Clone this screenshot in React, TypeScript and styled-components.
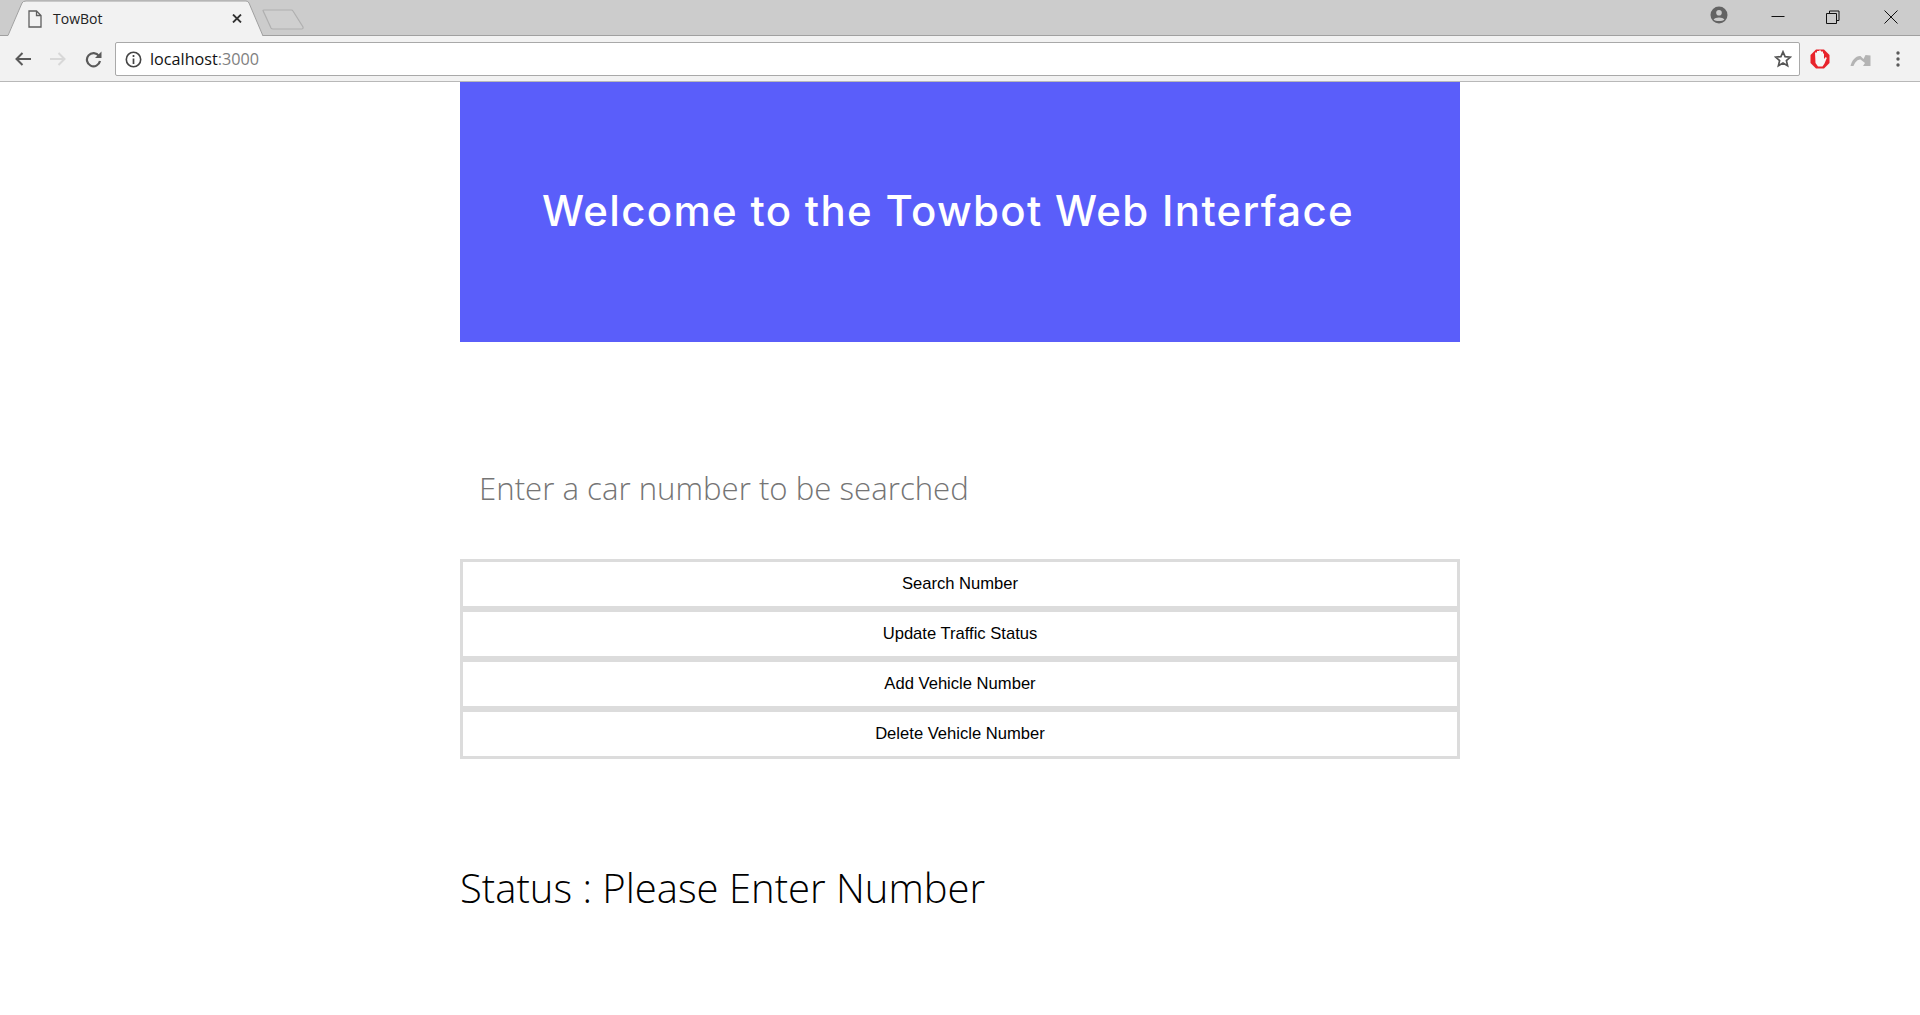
import React from 'react';
import styled, { createGlobalStyle } from 'styled-components';

const GlobalStyle = createGlobalStyle`
    html, body {
        margin: 0;
        padding: 0;
        background: #fff;
    }
    * {
        box-sizing: border-box;
    }
`;

const Page = styled.div`
    width: 1920px;
    height: 1015px;
    overflow: hidden;
    display: flex;
    flex-direction: column;
`;

const TabStrip = styled.div`
    height: 36px;
    background: #cccccc;
    border-bottom: 1px solid #a0a0a0;
    display: flex;
    align-items: flex-start;
`;

const Tab = styled.div`
    position: relative;
    width: 256px;
    height: 36px;
    margin-left: 7px;
    padding: 1px 21px 0 21px;
    display: flex;
    align-items: center;
    column-gap: 11px;
    flex-shrink: 0;
`;

const TabShape = styled.svg`
    position: absolute;
    left: 0;
    top: 0;
`;

const TabFavicon = styled.svg`
    position: relative;
`;

const TabTitle = styled.span`
    position: relative;
    flex: 1;
    font: 14px/18px "Open Sans", sans-serif;
    color: #222;
`;

const TabClose = styled.svg`
    position: relative;
`;

const NewTab = styled.svg`
    margin: 9px 0 0 -1px;
    flex-shrink: 0;
`;

const WindowControls = styled.div`
    margin-left: auto;
    display: flex;
    align-items: center;
    height: 33px;
`;

const ProfileIcon = styled.svg`
    margin-right: 23px;
    margin-top: -3px;
`;

const WindowButton = styled.div<{ $width: number }>`
    width: ${(p) => p.$width}px;
    height: 33px;
    display: flex;
    align-items: center;
    justify-content: center;
`;

const Toolbar = styled.div`
    height: 46px;
    background: #f2f2f2;
    border-bottom: 1px solid #b8b8b8;
    display: flex;
    align-items: center;
    padding: 1px 0 0 15px;
`;

const NavIcon = styled.svg<{ $gap: number }>`
    margin-right: ${(p) => p.$gap}px;
    flex-shrink: 0;
`;

const AddressBar = styled.div`
    width: 1685px;
    height: 34px;
    background: #fff;
    border: 1px solid #a9a9a9;
    border-radius: 2px;
    display: flex;
    align-items: center;
    padding: 0 7px 0 9px;
    flex-shrink: 0;
`;

const InfoIcon = styled.svg`
    margin-right: 8px;
`;

const Url = styled.span`
    flex: 1;
    font: 16.2px/20px "Open Sans", sans-serif;
    color: #111;
`;

const UrlPort = styled.span`
    color: #808080;
`;

const Extensions = styled.div`
    display: flex;
    align-items: center;
    flex: 1;
    padding-left: 10px;
`;

const ExtensionIcon = styled.svg<{ $gap: number }>`
    margin-right: ${(p) => p.$gap}px;
    flex-shrink: 0;
`;

const MenuIcon = styled.svg`
    flex-shrink: 0;
`;

const Main = styled.main`
    width: 1000px;
    margin: 0 auto;
`;

const Hero = styled.header`
    height: 260px;
    background: #5a5efa;
    display: flex;
    align-items: center;
    justify-content: center;
    padding: 0 24px 3px 0;
`;

const HeroTitle = styled.h1`
    margin: 0;
    font: 500 42px/50px Inter, sans-serif;
    letter-spacing: 1.3px;
    color: #fff;
`;

const SearchInput = styled.input`
    display: block;
    width: 100%;
    height: 80px;
    margin-top: 106px;
    padding: 0 19px;
    border: 0;
    outline: 0;
    font: 300 31.2px/44px "Open Sans", sans-serif;
    color: #222;

    &::placeholder {
        color: #757575;
        opacity: 1;
    }
`;

const ButtonStack = styled.div`
    margin-top: 31px;
    display: flex;
    flex-direction: column;
`;

const ActionButton = styled.button`
    height: 50px;
    background: #fff;
    border: 3px solid #dcdcdc;
    color: #000;
    font: 16.6px/20px "Liberation Sans", Arial, sans-serif;
    padding: 0;
    cursor: pointer;
`;

const Status = styled.h2`
    margin: 102px 0 0;
    font: 300 40px/54px "Open Sans", sans-serif;
    color: #000;
`;

const actions = ['Search Number', 'Update Traffic Status', 'Add Vehicle Number', 'Delete Vehicle Number'];

export default function App() {
    return (
        <Page>
            <GlobalStyle />
            <TabStrip>
                <Tab>
                    <TabShape width="256" height="37" viewBox="0 0 256 37">
                        <path d="M0.5 36 L15 3 Q16 1 19 1 L239 1 Q241 1 242 3 L256 36 Z" fill="#f2f2f2" />
                        <path d="M0 35.5 L1 35.5 L15 3 Q16 1 19 1 L239 1 Q241 1 242 3 L256 36" fill="none" stroke="#a0a0a0" />
                    </TabShape>
                    <TabFavicon width="14" height="18" viewBox="0 0 14 18">
                        <path d="M1 1 H8.5 L13 5.5 V17 H1 Z M8.5 1 V5.5 H13" fill="none" stroke="#5f5f5f" strokeWidth="1.3" />
                    </TabFavicon>
                    <TabTitle>TowBot</TabTitle>
                    <TabClose width="10" height="9" viewBox="0 0 10 9">
                        <path d="M1 0.5 L9 8.5 M9 0.5 L1 8.5" stroke="#333" strokeWidth="1.8" />
                    </TabClose>
                </Tab>
                <NewTab width="42" height="21" viewBox="0 0 42 21">
                    <path d="M1 1.5 Q1 1 2 1 L29 1 Q30.5 1 31 2 L41 18 Q41.5 20 39.5 20 L11 20 Q9.5 20 9 19 Z" fill="#cfcfcf" stroke="#b0b0b0" strokeWidth="1.2" />
                </NewTab>
                <WindowControls>
                    <ProfileIcon width="18" height="18" viewBox="0 0 18 18">
                        <circle cx="9" cy="9" r="8.5" fill="#636363" />
                        <circle cx="9" cy="6.8" r="2.8" fill="#cccccc" />
                        <path d="M3.6 13.6 C5 10.8 13 10.8 14.4 13.6 C12.5 15.6 5.5 15.6 3.6 13.6 Z" fill="#cccccc" />
                    </ProfileIcon>
                    <WindowButton $width={53}>
                        <svg width="14" height="14" viewBox="0 0 14 14">
                            <path d="M0.5 6.5 H13.5" stroke="#111" />
                        </svg>
                    </WindowButton>
                    <WindowButton $width={58}>
                        <svg width="14" height="14" viewBox="0 0 14 14">
                            <path d="M3.5 3 V1 H13 V10.5 H11 M0.5 3.5 H10.5 V13.5 H0.5 Z" fill="none" stroke="#111" />
                        </svg>
                    </WindowButton>
                    <WindowButton $width={58}>
                        <svg width="14" height="14" viewBox="0 0 14 14">
                            <path d="M0.5 0.5 L13.5 13.5 M13.5 0.5 L0.5 13.5" stroke="#111" />
                        </svg>
                    </WindowButton>
                </WindowControls>
            </TabStrip>
            <Toolbar>
                <NavIcon $gap={19} width="16" height="14" viewBox="0 0 16 14">
                    <path d="M16 7 H1.5 M7.5 1 L1.5 7 L7.5 13" fill="none" stroke="#5a5a5a" strokeWidth="2" />
                </NavIcon>
                <NavIcon $gap={19} width="16" height="14" viewBox="0 0 16 14">
                    <path d="M0 7 H14.5 M8.5 1 L14.5 7 L8.5 13" fill="none" stroke="#d8d8d8" strokeWidth="2" />
                </NavIcon>
                <NavIcon $gap={13} width="17" height="17" viewBox="0 0 17 17">
                    <path d="M14 5 A6.6 6.6 0 1 0 15 10" fill="none" stroke="#5a5a5a" strokeWidth="2.2" />
                    <path d="M10 7 H16.5 V0.5 Z" fill="#5a5a5a" />
                </NavIcon>
                <AddressBar>
                    <InfoIcon width="17" height="17" viewBox="0 0 17 17">
                        <circle cx="8.5" cy="8.5" r="7.2" fill="none" stroke="#444" strokeWidth="1.6" />
                        <path d="M8.5 7.5 V13 M8.5 4 V6" stroke="#444" strokeWidth="1.7" />
                    </InfoIcon>
                    <Url>
                        localhost<UrlPort>:3000</UrlPort>
                    </Url>
                    <svg width="18" height="18" viewBox="0 0 18 18">
                        <path d="M9 1.8 L11.1 6.6 L16.4 7.1 L12.4 10.6 L13.6 15.8 L9 13.1 L4.4 15.8 L5.6 10.6 L1.6 7.1 L6.9 6.6 Z" fill="none" stroke="#555" strokeWidth="1.7" />
                    </svg>
                </AddressBar>
                <Extensions>
                    <ExtensionIcon $gap={20} width="20" height="20" viewBox="0 0 20 20">
                        <path d="M6 0.5 H14 L19.5 6 V14 L14 19.5 H6 L0.5 14 V6 Z" fill="#e8232b" />
                        <path d="M5 3.5 H7 V2 H9 V1.5 H11 V2.5 H13 V4.5 H14 V10 L15.8 8 L16.8 9 L14.5 14.5 L12.5 17.5 H8 L5.5 14 Z" fill="#f6f6f6" />
                    </ExtensionIcon>
                    <ExtensionIcon $gap={25} width="21" height="15" viewBox="0 0 21 15">
                        <path d="M0.5 14 C2 8 6 3.5 10.5 4 L13.5 7 L15.5 3 L20.5 3.5 V14 H13 L15 11 L10.5 7.5 C8 7 5 10 3.5 14 Z" fill="#b4b4b4" />
                    </ExtensionIcon>
                    <MenuIcon width="4" height="16" viewBox="0 0 4 16">
                        <circle cx="2" cy="2" r="1.7" fill="#5a5a5a" />
                        <circle cx="2" cy="8" r="1.7" fill="#5a5a5a" />
                        <circle cx="2" cy="14" r="1.7" fill="#5a5a5a" />
                    </MenuIcon>
                </Extensions>
            </Toolbar>
            <Main>
                <Hero>
                    <HeroTitle>Welcome to the Towbot Web Interface</HeroTitle>
                </Hero>
                <SearchInput placeholder="Enter a car number to be searched" />
                <ButtonStack>
                    {actions.map((label) => (
                        <ActionButton key={label}>{label}</ActionButton>
                    ))}
                </ButtonStack>
                <Status>Status : Please Enter Number</Status>
            </Main>
        </Page>
    );
}
